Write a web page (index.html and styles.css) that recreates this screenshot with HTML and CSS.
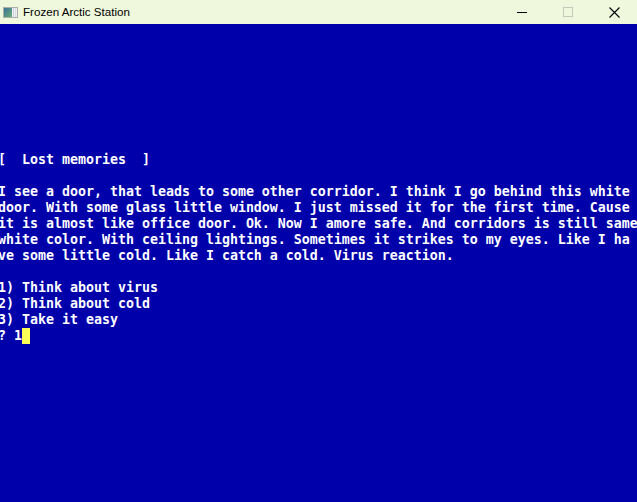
FILE: index.html
```html
<!DOCTYPE html>
<html lang="en">

<head>
    <meta charset="UTF-8">
    <meta name="viewport" content="width=device-width, initial-scale=1.0">
    <title>Frozen Arctic Station</title>
    <link rel="stylesheet" href="styles.css">
</head>

<body>
    <div class="window">
        <div class="titlebar">
            <svg class="app-icon" width="15" height="11" viewBox="0 0 15 11">
                <defs>
                    <linearGradient id="pic" x1="0" y1="0" x2="1" y2="1">
                        <stop offset="0" stop-color="#3d6f96" />
                        <stop offset="1" stop-color="#6bb07a" />
                    </linearGradient>
                </defs>
                <rect x="0.5" y="0.5" width="14" height="10" fill="#f2f2f2" stroke="#a9aea6" />
                <rect x="1" y="1" width="8" height="9" fill="url(#pic)" />
                <rect x="10" y="1" width="1" height="9" fill="#c9d3dc" />
                <rect x="12" y="1" width="1" height="9" fill="#d8dee3" />
            </svg>
            <span class="title">Frozen Arctic Station</span>
            <div class="controls">
                <div class="ctl">
                    <svg width="10" height="10" viewBox="0 0 10 10">
                        <line x1="0" y1="5.5" x2="10" y2="5.5" stroke="#000" stroke-width="1" />
                    </svg>
                </div>
                <div class="ctl">
                    <svg width="10" height="10" viewBox="0 0 10 10">
                        <rect x="0.5" y="0.5" width="9" height="9" fill="none" stroke="#c4c9bb" stroke-width="1" />
                    </svg>
                </div>
                <div class="ctl">
                    <svg width="11" height="11" viewBox="0 0 11 11">
                        <path d="M0.5 0.5 L10.5 10.5 M10.5 0.5 L0.5 10.5" stroke="#000" stroke-width="1.1" />
                    </svg>
                </div>
            </div>
        </div>

        <div class="screen">
<pre class="console">[  Lost memories  ]

I see a door, that leads to some other corridor. I think I go behind this white
door. With some glass little window. I just missed it for the first time. Cause
it is almost like office door. Ok. Now I amore safe. And corridors is still same
white color. With ceiling lightings. Sometimes it strikes to my eyes. Like I ha
ve some little cold. Like I catch a cold. Virus reaction.

1) Think about virus
2) Think about cold
3) Take it easy
? 1<span class="cursor"></span></pre>
        </div>
    </div>
</body>

</html>
```

FILE: styles.css
```css
body {
    margin: 0;
    background-color: #0000aa;
    overflow: hidden;
}

.window {
    width: 637px;
    height: 502px;
    display: flex;
    flex-direction: column;
}

.titlebar {
    height: 24px;
    flex-shrink: 0;
    background-color: #eff7dc;
    display: flex;
    align-items: center;
    font-family: "Liberation Sans", Arial, sans-serif;
    font-size: 11.6px;
    color: #000;
}

.app-icon {
    margin-left: 3px;
    margin-right: 5px;
}

.title {
    margin-top: -1px;
}

.controls {
    margin-left: auto;
    display: flex;
    height: 100%;
}

.ctl {
    width: 46px;
    height: 100%;
    display: flex;
    align-items: center;
    justify-content: center;
}

.screen {
    flex: 1;
    background-color: #0000aa;
    overflow: hidden;
}

.console {
    margin: 0 0 0 -2px;
    padding-top: 128px;
    font-family: "DejaVu Sans Mono", monospace;
    font-weight: bold;
    font-size: 13.29px;
    line-height: 16px;
    color: #fff;
    white-space: pre;
}

.cursor {
    display: inline-block;
    width: 8px;
    height: 16px;
    vertical-align: top;
    background-color: #ffff55;
}
```
